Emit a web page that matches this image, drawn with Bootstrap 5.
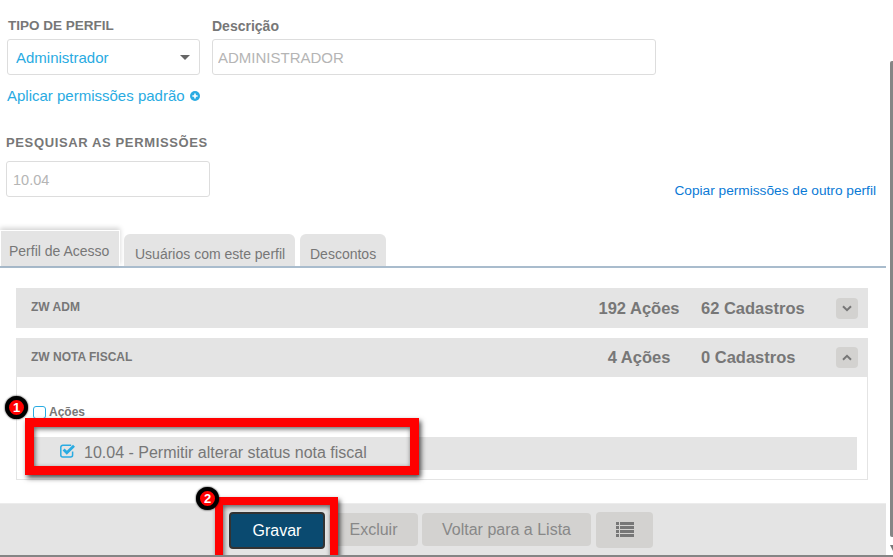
<!DOCTYPE html>
<html lang="pt-BR">
<head>
<meta charset="utf-8">
<title>Perfil de Acesso</title>
<link href="https://cdn.jsdelivr.net/npm/bootstrap@5.3.0/dist/css/bootstrap.min.css" rel="stylesheet">
<style>
html,body{height:557px;overflow:hidden;background:#fff}
body{font-family:"Liberation Sans",Arial,sans-serif;color:#777}
.shell{position:relative;width:893px;height:557px;overflow:hidden;border-bottom:2px solid #858585}
.pane{width:886px;flex:none}
.rail{width:7px;flex:none;padding-left:4px}
.thumb{margin-top:61px;height:476px;background:#858585;border-radius:2px 0 0 2px}
.rail-arrow{margin-top:8px;width:0;height:0;border-left:3px solid transparent;border-right:0;border-top:6px solid #777}
.top-row{padding:18px 0 0 7px}
.fld-label{font-size:13.5px;line-height:16px;font-weight:700;color:#777;margin-bottom:5px}
.lab-tipo{padding-left:1px}
.lab-desc{font-size:14px}
.spaced{font-size:13px;letter-spacing:.63px;margin-bottom:10px}
.fld{height:36px;border:1px solid #ddd;border-radius:3px;font-size:15px;padding:0 5px;box-shadow:none;background-color:#fff}
.fld-type{width:193px;padding:1px 0 0 8px;color:#29abe2;background-image:none;line-height:34px}
.fld-desc{width:444px;color:#b5b5b5}
.fld-search{width:204px;color:#b5b5b5;font-size:14.5px;padding:2px 0 0 6px}
.type-wrap{position:relative;margin-right:12px}
.caret-down{position:absolute;left:173px;top:37px;border-left:5px solid transparent;border-right:5px solid transparent;border-top:5px solid #666}
.apply{display:flex;align-items:center;gap:5px;margin:12px 0 0 7px;font-size:15px;line-height:18px;color:#29abe2;text-decoration:none}
.search-row{margin-top:30px;padding:0 10px 0 6px}
.copy{margin:47px 0 -3px;font-size:13.7px;line-height:18px;color:#0a7ad6;text-decoration:none}
.tab-strip{margin-top:33px;height:38px;border-bottom:2px solid #a9bccd;align-items:flex-end;padding:0;flex-wrap:nowrap}
.tab-on,.tab-off{display:block;background:#e4e4e4;color:#777;text-decoration:none;font-size:14px}
.tab-on{width:120px;height:36px;padding-left:8px;box-shadow:0 -2px 5px rgba(0,0,0,.18);border:1px solid #fff;border-bottom:0;line-height:40px}
.tab-off{height:32px;line-height:40px;border-radius:6px 6px 0 0}
.tab-users{width:171px;margin-left:4px;padding-left:11px}
.tab-disc{width:86px;margin-left:5px;padding-left:10px}
.group-list{margin:20px 18px 0 16px}
.group-head{background:#e4e4e4;display:flex;align-items:center;padding-right:10px}
.h-a{height:40px}
.h-b{height:39px;margin-top:10px}
.group-title{flex:1;padding:0 0 2px 15px;font-size:12px;font-weight:700;color:#777}
.stat-a{width:102px;text-align:center;font-size:16.5px;font-weight:700}
.stat-b{width:135px;margin-left:11px;font-size:16.5px;font-weight:700}
.chev{width:22px;height:21px;background:#d3d2d0;border-radius:4px;border:0;padding:0;display:flex;align-items:center;justify-content:center}
.group-body{height:103px;border:1px solid #e4e4e4;border-top:0;padding:28px 10px 0 16px}
.all-line{display:flex;align-items:center;height:14px;gap:3px;font-size:12px;font-weight:700;color:#777}
.chk{appearance:none;width:13px;height:13px;margin:0;border:1px solid #29abe2;border-radius:3px;background:#fff;flex:none}
.perm-row{margin-top:18px;height:33px;background:#e4e4e4;display:flex;align-items:center;padding:0 0 1px 27px;gap:8px;font-size:16px;color:#777}
.perm-ico{margin-bottom:4px}
.foot{margin-top:23px;height:52px;background:#e4e4e4;display:flex;align-items:center;padding-left:229px;border-top:1px solid #ececec}
.btn-save,.btn-dim,.btn-menu{font-size:16px;padding:0;border-radius:4px;text-align:center}
.btn-save{width:96px;height:37px;background:#0a4a70;border:2px solid #333;color:#fff;margin-top:2px}
.btn-dim{height:33px;background:#d3d2d0;border:0;color:#888;margin-left:4px}
.btn-dim.ex{width:89px}
.btn-dim.vo{width:169px}
.btn-menu{width:57px;height:36px;margin-left:5px;background:#d3d2d0;border:0;display:flex;align-items:center;justify-content:center}
.red-box{position:absolute;border:9px solid #f00;box-shadow:2px 3px 5px rgba(0,0,0,.7),inset 1px 2px 5px rgba(0,0,0,.6)}
.rb-1{left:25px;top:418px;width:394px;height:57px}
.rb-2{left:215px;top:497px;width:123px;height:70px;border-width:8px}
.pin{position:absolute;width:23px;height:23px;border-radius:50%;background:#f00;border:4px solid #000;color:#fff;font-size:13px;font-weight:700;line-height:15px;text-align:center;box-shadow:0 0 2px #000}
.pin-1{left:5px;top:396px}
.pin-2{left:196px;top:487px}
</style>
</head>
<body>
<div class="shell d-flex">
  <main class="pane">
    <div class="top-row d-flex">
      <div class="type-wrap">
        <label class="fld-label lab-tipo d-block" for="tipo">TIPO DE PERFIL</label>
        <select id="tipo" class="form-select fld fld-type"><option>Administrador</option></select>
        <span class="caret-down"></span>
      </div>
      <div>
        <label class="fld-label lab-desc d-block" for="desc">Descrição</label>
        <input id="desc" class="form-control fld fld-desc" value="ADMINISTRADOR">
      </div>
    </div>
    <a class="apply" href="#">Aplicar permissões padrão
      <svg width="10" height="10" viewBox="0 0 10 10"><circle cx="5" cy="5" r="5" fill="#29abe2"/><path d="M2.4 5h5.2M5 2.4v5.2" stroke="#fff" stroke-width="1.6"/></svg>
    </a>
    <div class="search-row d-flex justify-content-between align-items-start">
      <div>
        <label class="fld-label spaced d-block" for="busca">PESQUISAR AS PERMISSÕES</label>
        <input id="busca" class="form-control fld fld-search" value="10.04">
      </div>
      <a class="copy" href="#">Copiar permissões de outro perfil</a>
    </div>
    <ul class="nav tab-strip d-flex">
      <li><a class="tab-on" href="#">Perfil de Acesso</a></li>
      <li><a class="tab-off tab-users" href="#">Usuários com este perfil</a></li>
      <li><a class="tab-off tab-disc" href="#">Descontos</a></li>
    </ul>
    <div class="group-list">
      <div class="group-head h-a">
        <span class="group-title">ZW ADM</span>
        <span class="stat-a">192 Ações</span>
        <span class="stat-b">62 Cadastros</span>
        <button class="chev" aria-label="Expandir"><svg width="10" height="7" viewBox="0 0 10 7"><path d="M1 1.2l4 4 4-4" fill="none" stroke="#777" stroke-width="2"/></svg></button>
      </div>
      <div class="group-head h-b">
        <span class="group-title">ZW NOTA FISCAL</span>
        <span class="stat-a">4 Ações</span>
        <span class="stat-b">0 Cadastros</span>
        <button class="chev" aria-label="Recolher"><svg width="10" height="7" viewBox="0 0 10 7"><path d="M1 5.8l4-4 4 4" fill="none" stroke="#777" stroke-width="2"/></svg></button>
      </div>
      <div class="group-body">
        <label class="all-line"><input type="checkbox" class="chk">Ações</label>
        <div class="perm-row">
          <svg class="perm-ico" width="16" height="14" viewBox="0 0 16 14"><path d="M12.6 7.6v3.4a2 2 0 0 1-2 2H2.8a2 2 0 0 1-2-2V3.3a2 2 0 0 1 2-2h8.4" fill="none" stroke="#29abe2" stroke-width="1.5"/><path d="M3.6 5.6l3.2 3.2L14 1.8" fill="none" stroke="#29abe2" stroke-width="2.8"/></svg>
          <span>10.04 - Permitir alterar status nota fiscal</span>
        </div>
      </div>
    </div>
    <div class="foot">
      <button class="btn-save">Gravar</button>
      <button class="btn-dim ex">Excluir</button>
      <button class="btn-dim vo">Voltar para a Lista</button>
      <button class="btn-menu" aria-label="Lista"><svg width="18" height="15" viewBox="0 0 18 15" fill="#777"><path d="M0 0h3v3H0zM4 0h14v3H4zM0 4h3v3H0zM4 4h14v3H4zM0 8h3v3H0zM4 8h14v3H4zM0 12h3v3H0zM4 12h14v3H4z"/></svg></button>
    </div>
  </main>
  <div class="rail"><div class="thumb"></div><div class="rail-arrow"></div></div>
  <div class="red-box rb-1"></div>
  <div class="red-box rb-2"></div>
  <div class="pin pin-1">1</div>
  <div class="pin pin-2">2</div>
</div>
<script src="https://cdn.jsdelivr.net/npm/bootstrap@5.3.0/dist/js/bootstrap.bundle.min.js"></script>
</body>
</html>
